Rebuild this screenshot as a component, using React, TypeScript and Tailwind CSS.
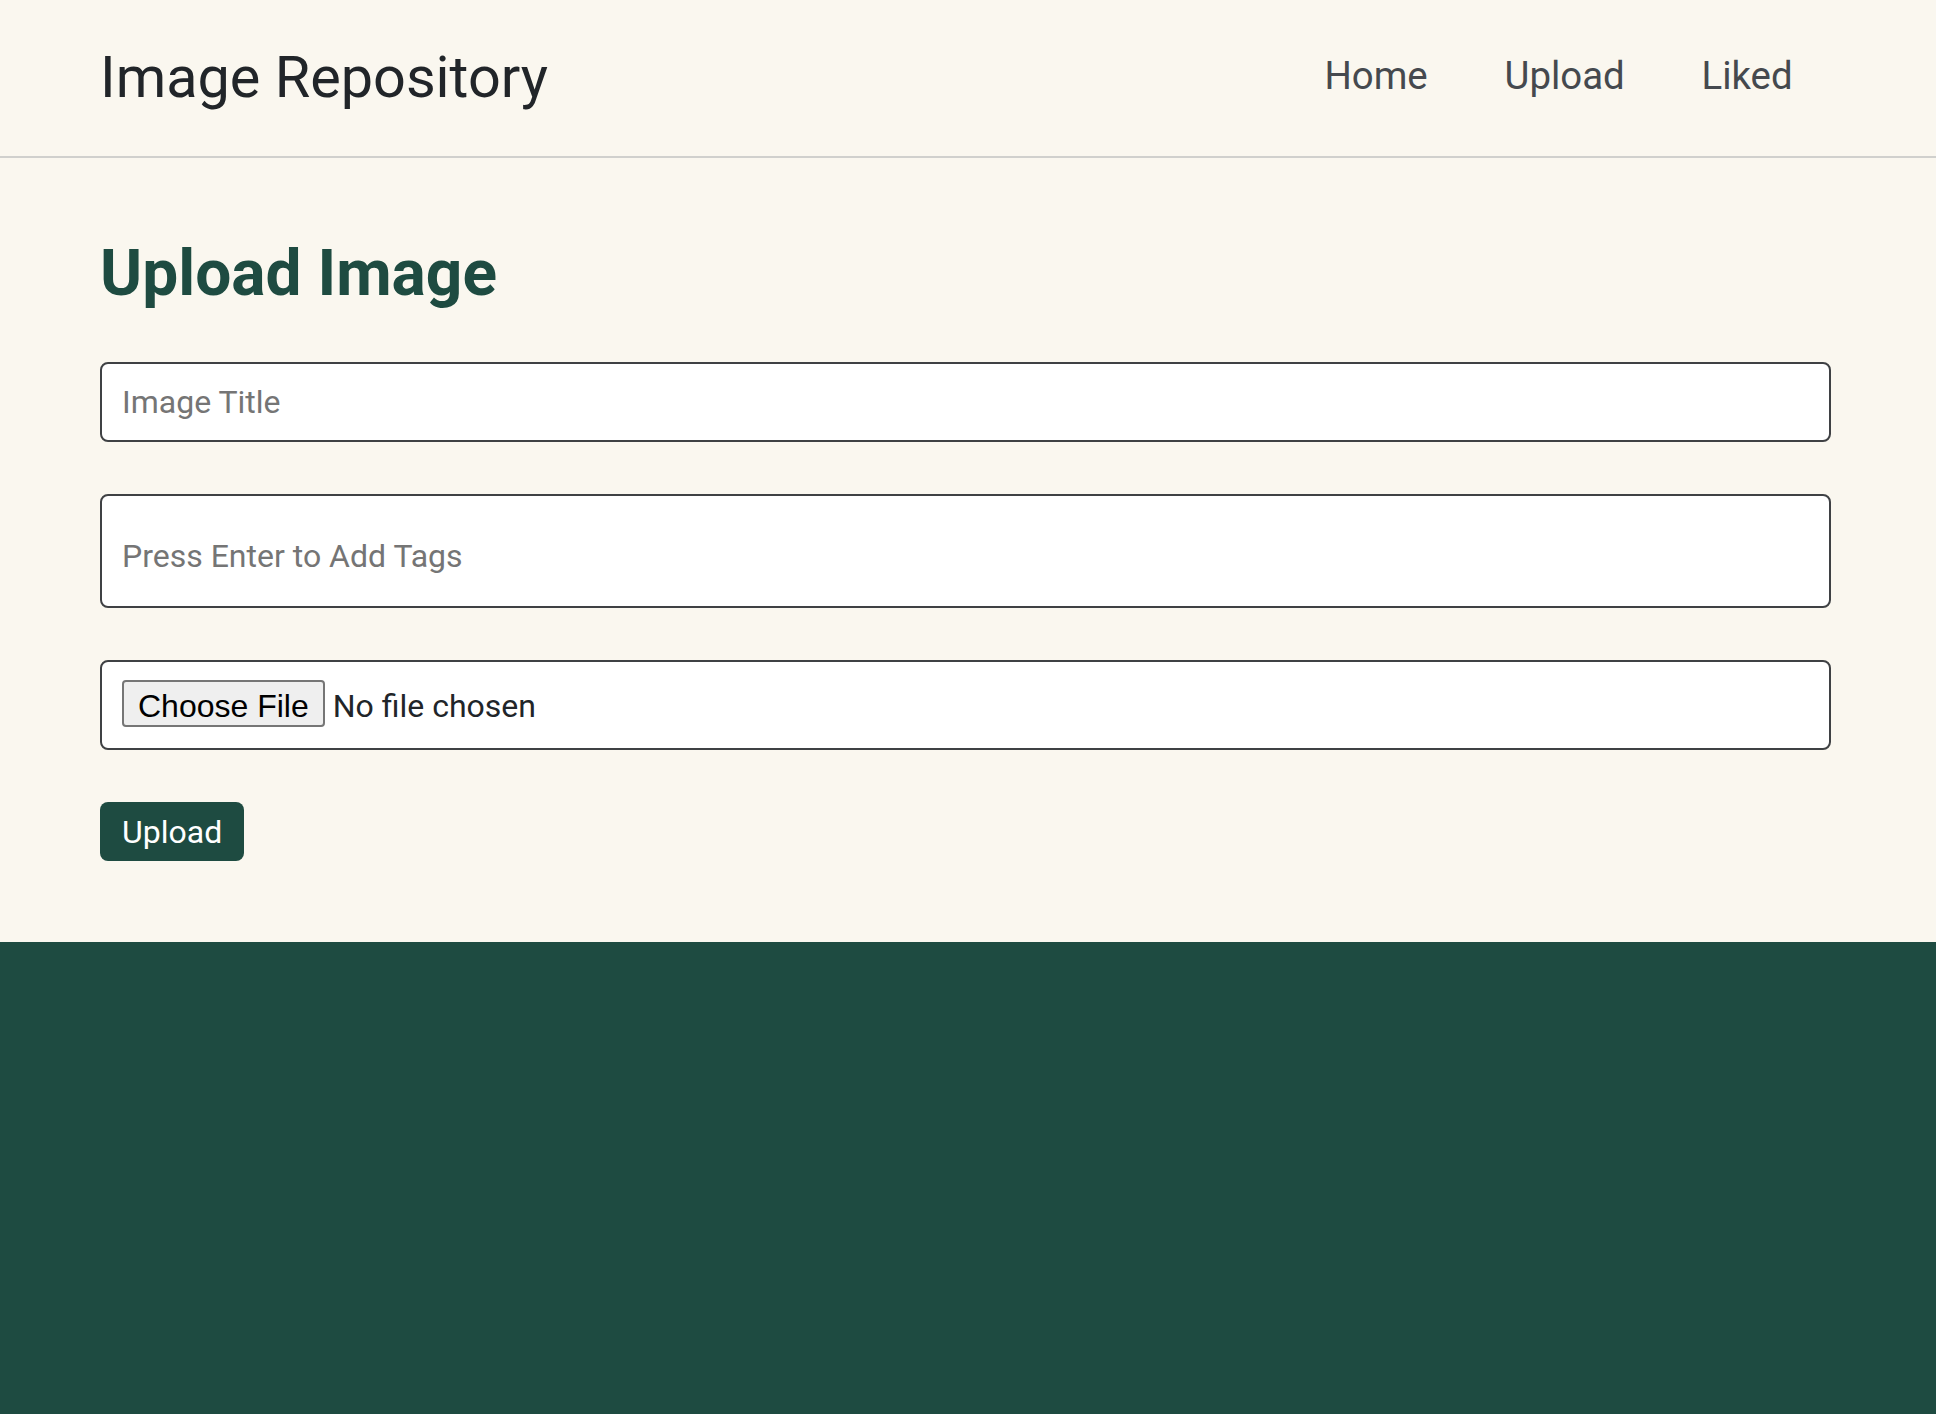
import { useState } from "react";

export default function App() {
    const [title, setTitle] = useState<string>("");
    const [tagInput, setTagInput] = useState<string>("");
    const [tags, setTags] = useState<string[]>([]);

    const onTagKey = (e: React.KeyboardEvent<HTMLInputElement>) => {
        if (e.key === "Enter" && tagInput.trim()) {
            e.preventDefault();
            setTags([...tags, tagInput.trim()]);
            setTagInput("");
        }
    };

    return (
        <div className="min-h-screen flex flex-col bg-[#1e4b41] font-['Roboto',sans-serif]">
            <header className="h-[158px] flex items-center justify-between pl-[100px] pr-[105px] bg-[#faf7ef] border-b-2 border-[#d0d0cd]">
                <a href="#" className="text-[57.6px] leading-none text-[#212529]">
                    Image Repository
                </a>
                <nav className="flex items-center pb-[4px]">
                    <a href="#" className="px-[38.4px] text-[38.4px] leading-none text-[#45494e]">
                        Home
                    </a>
                    <a href="#" className="px-[38.4px] text-[38.4px] leading-none text-[#45494e]">
                        Upload
                    </a>
                    <a href="#" className="px-[38.4px] text-[38.4px] leading-none text-[#45494e]">
                        Liked
                    </a>
                </nav>
            </header>

            <main className="bg-[#faf7ef] pl-[100px] pr-[105px] pt-[77px] pb-[81px]">
                <h1 className="text-[64px] leading-[77px] font-bold text-[#1e4b41] mb-[50px]">Upload Image</h1>
                <form className="flex flex-col gap-[52px]" onSubmit={(e) => e.preventDefault()}>
                    <input
                        type="text"
                        value={title}
                        onChange={(e) => setTitle(e.target.value)}
                        placeholder="Image Title"
                        className="h-[80px] w-full px-[20px] bg-white border-2 border-[#3f4144] rounded-[8px] text-[32px] text-[#212529] placeholder:text-[#757575] outline-none"
                    />
                    {/* tag box: chips go before the input */}
                    <div className="h-[114px] w-full flex items-center flex-wrap gap-2 pt-[10px] px-[20px] bg-white border-2 border-[#3f4144] rounded-[8px]">
                        {tags.map((t) => (
                            <span key={t} className="px-3 py-1 rounded bg-[#1e4b41] text-white text-[24px]">
                                {t}
                            </span>
                        ))}
                        <input
                            type="text"
                            value={tagInput}
                            onChange={(e) => setTagInput(e.target.value)}
                            onKeyDown={onTagKey}
                            placeholder="Press Enter to Add Tags"
                            className="flex-1 text-[32px] text-[#212529] placeholder:text-[#757575] outline-none bg-transparent"
                        />
                    </div>
                    <div className="h-[90px] w-full flex items-center px-[20px] bg-white border-2 border-[#3f4144] rounded-[8px]">
                        <input
                            type="file"
                            className="text-[32px] text-[#212529] file:h-[47px] file:px-[14px] file:mr-[8px] file:bg-[#efefef] file:border-2 file:border-[#767676] file:rounded-[4px] file:text-black file:font-['Liberation_Sans',sans-serif] file:text-[32px]"
                        />
                    </div>
                    <div>
                        <button type="submit" className="h-[59px] px-[22px] rounded-[8px] bg-[#1e4b41] text-white text-[32px] leading-none">
                            Upload
                        </button>
                    </div>
                </form>
            </main>

            <footer className="flex-1 bg-[#1e4b41]" />
        </div>
    );
}
